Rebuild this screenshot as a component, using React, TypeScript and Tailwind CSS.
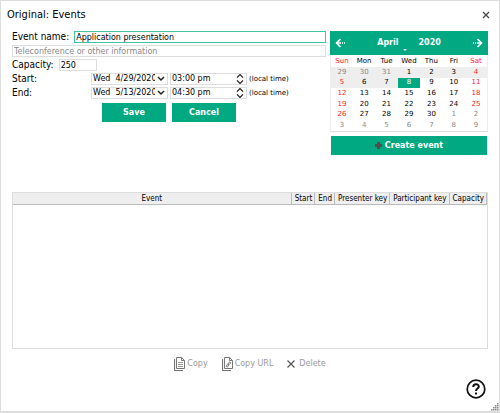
import { useState } from "react";

const weekDays = ["Sun", "Mon", "Tue", "Wed", "Thu", "Fri", "Sat"];
const weeks = [
  [29, 30, 31, 1, 2, 3, 4],
  [5, 6, 7, 8, 9, 10, 11],
  [12, 13, 14, 15, 16, 17, 18],
  [19, 20, 21, 22, 23, 24, 25],
  [26, 27, 28, 29, 30, 1, 2],
  [3, 4, 5, 6, 7, 8, 9],
];

function dayClass(week: number, day: number) {
  const position = week * 7 + day;
  const isOutside = position < 3 || position > 32;
  const isWeekend = day === 0 || day === 6;
  if (position === 10) return "bg-[#00a982] text-white";
  const background = position < 10 ? "bg-[#eeeeee]" : "bg-white";
  if (isOutside) return `${background} text-[#888888]`;
  return isWeekend ? `${background} text-[#ff1a1a]` : `${background} text-black`;
}

function DateRow({ id, label, date, time }: { id: string; label: string; date: string; time: string }) {
  const [value, setValue] = useState(time);
  return (
    <div className="flex h-3 items-center">
      <label htmlFor={id} className="w-[79px] shrink-0 font-['DejaVu_Sans_Condensed','DejaVu_Sans',sans-serif] text-[10px] leading-3">
        {label}
      </label>
      <div className="relative h-3 w-[77px] shrink-0 border border-[#dddddd]">
        <select id={id} className="block h-full w-full appearance-none overflow-hidden pr-3 pl-px text-[8px] leading-[10px] whitespace-pre outline-none">
          <option>{date}</option>
        </select>
        <svg viewBox="0 0 8 6" className="pointer-events-none absolute top-0.5 right-0.5 h-1.5 w-2 bg-white" fill="none" stroke="#222" strokeWidth="1.5">
          <path d="M1 1l3 3 3-3" />
        </svg>
      </div>
      <div className="ml-0.5 flex h-3 w-[77px] shrink-0 border border-[#dddddd] bg-white">
        <input
          aria-label={`${label} time`}
          value={value}
          onChange={(e) => setValue(e.target.value)}
          className="min-w-0 flex-1 pl-px text-[8px] leading-[10px] outline-none"
        />
        <div className="flex w-3 flex-col justify-between">
          <button aria-label="Later" className="flex justify-center">
            <svg viewBox="0 0 8 5" className="h-[5px] w-2" fill="none" stroke="#222" strokeWidth="1.3">
              <path d="M1 3.6l3-3 3 3" />
            </svg>
          </button>
          <button aria-label="Earlier" className="flex justify-center">
            <svg viewBox="0 0 8 5" className="h-[5px] w-2" fill="none" stroke="#222" strokeWidth="1.3">
              <path d="M1 1.4l3 3 3-3" />
            </svg>
          </button>
        </div>
      </div>
      <span className="ml-0.5 text-[7px] leading-3 whitespace-nowrap">(local time)</span>
    </div>
  );
}

function CopyIcon({ link }: { link?: boolean }) {
  return (
    <svg viewBox="0 0 11 14" className="h-3.5 w-[11px]" fill="none" stroke="#777" strokeWidth="1">
      <path d="M2.5 .5h5l3 3v8h-8z" fill="#fff" />
      <path d="M7.5 .5v3h3" />
      <path d="M.5 2v11.5H9" strokeWidth="1.2" />
      {link ? (
        <path d="M4.2 9.5l1.6-2.8 1.2.8-1.6 2.6zM6.2 6.8l1.4-2 1.2.8-1.6 2" />
      ) : (
        <path d="M4 5.5h5M4 7.5h5M4 9.5h5" stroke="#999" />
      )}
    </svg>
  );
}

export default function App() {
  const [name, setName] = useState("Application presentation");
  const [info, setInfo] = useState("");
  const [capacity, setCapacity] = useState("250");

  return (
    <div className="flex min-h-screen flex-col bg-white font-['DejaVu_Sans',sans-serif] text-black">
      <main className="relative flex flex-1 flex-col border border-b-2 border-[#dddddd] px-[11px] pb-3">
        <header className="mb-0.5 flex h-7 shrink-0 items-center justify-between">
          <h1 className="-ml-[5px] font-['DejaVu_Sans_Condensed','DejaVu_Sans',sans-serif] text-[11px]">Original: Events</h1>
          <button aria-label="Close" className="-mr-1 flex h-3 w-3 items-center justify-center">
            <svg viewBox="0 0 8 8" className="h-2 w-2" stroke="#444" strokeWidth="1.2">
              <path d="M1 1l6 6M7 1l-6 6" />
            </svg>
          </button>
        </header>

        <div className="flex h-[161px] shrink-0 gap-1">
          <form className="flex min-w-0 flex-1 flex-col gap-0.5" onSubmit={(e) => e.preventDefault()}>
            <div className="flex h-3 items-center gap-[5px]">
              <label htmlFor="name" className="font-['DejaVu_Sans_Condensed','DejaVu_Sans',sans-serif] text-[10px] leading-3 whitespace-nowrap">
                Event name:
              </label>
              <input
                id="name"
                value={name}
                onChange={(e) => setName(e.target.value)}
                className="h-3 min-w-0 flex-1 border border-[#41c4a5] px-px text-[8px] leading-[10px] outline-none"
              />
            </div>
            <input
              aria-label="Information"
              value={info}
              placeholder="Teleconference or other information"
              onChange={(e) => setInfo(e.target.value)}
              className="h-3 w-full shrink-0 border border-[#dddddd] px-px text-[8px] leading-[10px] outline-none placeholder:text-[#888888]"
            />
            <div className="flex h-3 items-center gap-[5px]">
              <label htmlFor="capacity" className="font-['DejaVu_Sans_Condensed','DejaVu_Sans',sans-serif] text-[10px] leading-3">
                Capacity:
              </label>
              <input
                id="capacity"
                value={capacity}
                onChange={(e) => setCapacity(e.target.value)}
                className="h-3 w-[38px] border border-[#dddddd] px-px text-[8px] leading-[10px] outline-none"
              />
            </div>
            <DateRow id="start" label="Start:" date={"Wed\u00a0 4/29/2020"} time="03:00 pm" />
            <DateRow id="end" label="End:" date={"Wed\u00a0 5/13/2020"} time="04:30 pm" />
            <div className="mt-0.5 flex gap-1.5 pl-[90px]">
              <button className="h-[19px] w-16 bg-[#00a982] text-[8px] font-bold text-white">Save</button>
              <button className="h-[19px] w-16 bg-[#00a982] text-[8px] font-bold text-white">Cancel</button>
            </div>
          </form>

          <aside className="flex w-[158px] shrink-0 flex-col">
            <section className="h-[101px] border-b border-[#dddddd]">
              <div className="flex h-6 items-center bg-[#00a982] px-[5px] text-[8px] font-bold text-white">
                <button aria-label="Previous month">
                  <svg viewBox="0 0 10 10" className="h-2.5 w-2.5" fill="none" stroke="#fff" strokeWidth="1.6">
                    <path d="M5.5 1l-4 4 4 4" />
                    <path d="M2 5h8" strokeDasharray="4 1 1 1" />
                  </svg>
                </button>
                <div className="flex flex-1 justify-center gap-5">
                  <button className="relative">
                    April
                    <svg viewBox="0 0 4 2" className="absolute top-3 left-[26px] h-0.5 w-1" fill="#fff">
                      <path d="M0 0h4L2 2z" />
                    </svg>
                  </button>
                  <button>2020</button>
                </div>
                <button aria-label="Next month">
                  <svg viewBox="0 0 10 10" className="h-2.5 w-2.5" fill="none" stroke="#fff" strokeWidth="1.6">
                    <path d="M4.5 1l4 4-4 4" />
                    <path d="M8 5H0" strokeDasharray="4 1 1 1" />
                  </svg>
                </button>
              </div>
              <table className="h-[76px] w-full table-fixed border-collapse border-x border-[#eeeeee] text-center text-[7px] leading-[9px]">
                <thead>
                  <tr className="h-3">
                    {weekDays.map((day, i) => (
                      <th key={day} className={i === 0 || i === 6 ? "p-0 pt-px font-normal text-[#ff1a1a]" : "p-0 pt-px font-normal"}>
                        {day}
                      </th>
                    ))}
                  </tr>
                </thead>
                <tbody>
                  {weeks.map((days, week) => (
                    <tr key={week}>
                      {days.map((day, i) => (
                        <td key={i} className={`p-0 ${dayClass(week, i)}`}>
                          {day}
                        </td>
                      ))}
                    </tr>
                  ))}
                </tbody>
              </table>
            </section>
            <button className="mx-px mt-1 flex h-[19px] items-center justify-center gap-[3px] bg-[#00a982] text-[8px] font-bold text-white">
              <svg viewBox="0 0 7 7" className="h-[7px] w-[7px]" fill="#50504f">
                <path d="M2 0h3v2h2v3H5v2H2V5H0V2h2z" />
              </svg>
              Create event
            </button>
          </aside>
        </div>

        <section className="flex-1 border border-[#dddddd]">
          <table className="h-3 w-full border-separate border-spacing-0 bg-[#eeeeee] font-['DejaVu_Sans_Condensed','DejaVu_Sans',sans-serif] text-[8px] leading-[10px] whitespace-nowrap">
            <thead>
              <tr>
                <th className="w-full border-r border-b border-[#bbbbbb] p-0 font-normal">Event</th>
                {["Start", "End", "Presenter key", "Participant key", "Capacity"].map((title) => (
                  <th key={title} className="border-r border-b border-[#bbbbbb] py-0 pr-0.5 pl-[3px] font-normal">
                    {title}
                  </th>
                ))}
              </tr>
            </thead>
          </table>
        </section>

        <div className="mt-2 flex h-3.5 shrink-0 justify-center gap-3.5 text-[8px] text-[#999999]">
          <button className="flex items-center gap-0.5">
            <CopyIcon />
            Copy
          </button>
          <button className="flex items-center gap-0.5">
            <CopyIcon link />
            Copy URL
          </button>
          <button className="flex items-center gap-1">
            <svg viewBox="0 0 8 8" className="h-2 w-2" stroke="#555" strokeWidth="1.2">
              <path d="M.5 .5l7 7M7.5 .5l-7 7" />
            </svg>
            Delete
          </button>
        </div>

        <button aria-label="Help" className="mt-2 mr-0.5 self-end">
          <svg viewBox="0 0 20 20" className="h-5 w-5" fill="none" stroke="#111" strokeWidth="1.7">
            <circle cx="10" cy="10" r="8.8" />
            <path d="M7.2 8c0-3.8 5.6-3.6 5.6-.4 0 2-2.8 2-2.8 4.4" strokeWidth="2" />
            <path d="M9 13.5h2v2H9z" fill="#111" stroke="none" />
          </svg>
        </button>

        <svg viewBox="0 0 8 8" className="absolute right-0 bottom-0 h-2 w-2" fill="#888">
          <path d="M6 0h1.5v1.5H6zM4 2h1.5v1.5H4zM6 2h1.5v1.5H6zM2 4h1.5v1.5H2zM4 4h1.5v1.5H4zM6 4h1.5v1.5H6zM0 6h1.5v1.5H0zM2 6h1.5v1.5H2zM4 6h1.5v1.5H4zM6 6h1.5v1.5H6z" />
        </svg>
      </main>
    </div>
  );
}
